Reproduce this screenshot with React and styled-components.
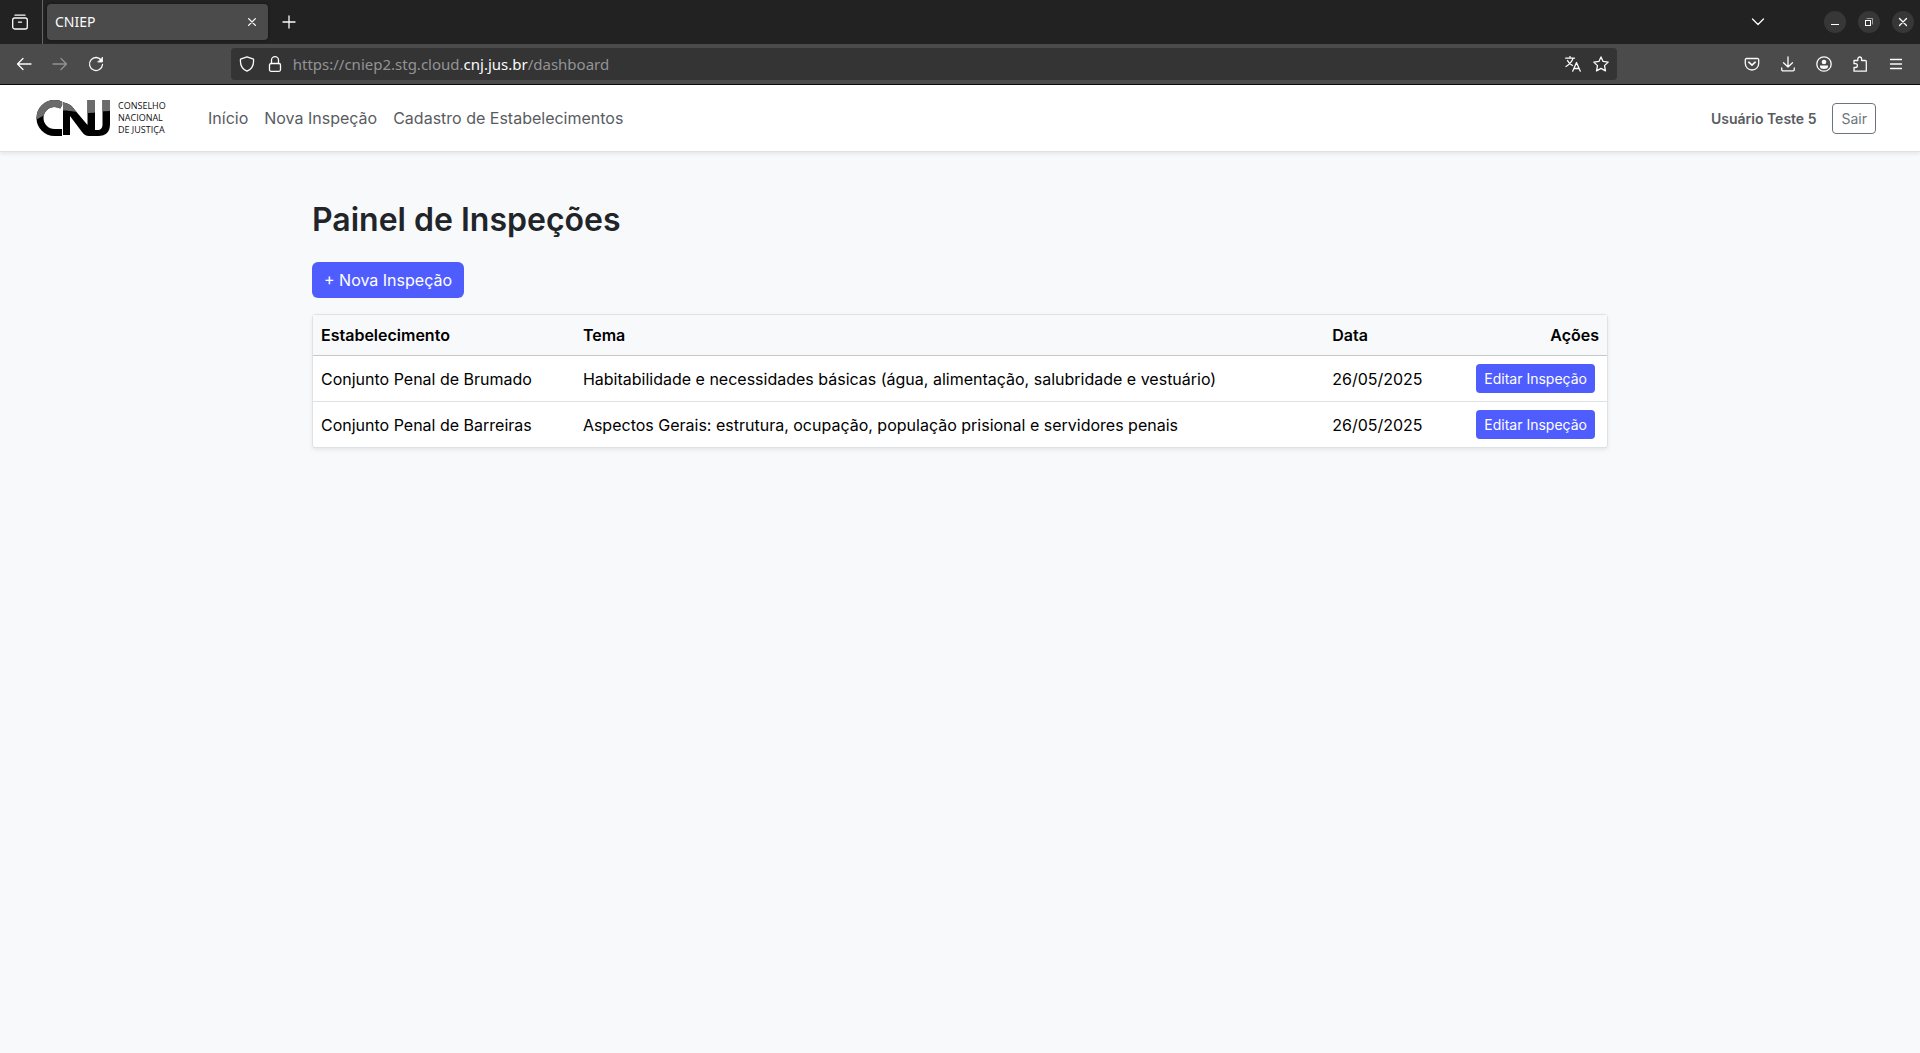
import React from 'react';
import styled, { createGlobalStyle } from 'styled-components';

const GlobalStyle = createGlobalStyle`
  *, *::before, *::after { box-sizing: border-box; }
  body {
    margin: 0;
    background: #f8f9fb;
    color: #212529;
    font: 400 16px/24px Inter, "Liberation Sans", sans-serif;
  }
  button { font-family: inherit; cursor: pointer; }
`;

/* ---------- Browser window ---------- */

const Chrome = styled.header`
  background: #222;
  color: #fbfbfe;
  font-family: "Noto Sans", "Open Sans", sans-serif;
  border-bottom: 1px solid #0c0c0d;
`;

const TabStrip = styled.div`
  display: flex;
  align-items: center;
  height: 44px;
  padding-right: 6px;
`;

const ChromeButton = styled.button`
  display: flex;
  align-items: center;
  justify-content: center;
  flex: none;
  width: ${(p) => p.$width || 36}px;
  height: 32px;
  padding: 0;
  border: 0;
  background: none;
  color: inherit;
  opacity: ${(p) => (p.disabled ? 0.4 : 1)};
`;

const Divider = styled.span`
  width: 1px;
  height: 44px;
  margin: 0 4px 0 2px;
  background: #666;
`;

const Tab = styled.div`
  display: flex;
  align-items: center;
  justify-content: space-between;
  width: 221px;
  height: 36px;
  padding: 0 4px 0 8px;
  border-radius: 4px;
  background: #4b4b4b;
  box-shadow: 0 0 3px rgba(0, 0, 0, 0.5);
  font-size: 14px;
  line-height: 20px;
`;

const WindowControls = styled.div`
  display: flex;
  gap: 12px;
  margin-left: 48px;
`;

const WindowButton = styled.button`
  display: flex;
  align-items: center;
  justify-content: center;
  width: 22px;
  height: 22px;
  padding: 0;
  border: 0;
  border-radius: 50%;
  background: #373737;
  color: #fff;
`;

const Toolbar = styled.div`
  display: flex;
  align-items: center;
  height: 40px;
  padding: 0 6px;
  background: #4b4b4b;
`;

const Spring = styled.span`
  flex: ${(p) => p.$grow || 1} 1 0;
`;

const AddressBar = styled.div`
  display: flex;
  align-items: center;
  flex: 154 1 0;
  min-width: 0;
  height: 32px;
  padding: 0 2px;
  border-radius: 4px;
  background: #343434;
`;

const Address = styled.div`
  flex: 1;
  min-width: 0;
  padding-left: 4px;
  overflow: hidden;
  white-space: nowrap;
  color: #939395;
  font-size: 15px;
  line-height: 20px;
  outline: none;
`;

const Domain = styled.span`
  color: #fbfbfe;
`;

const IconSvg = styled.svg`
  display: block;
  flex: none;
  fill: none;
  stroke: currentColor;
  stroke-width: ${(p) => p.$stroke || 1.3};
  stroke-linecap: round;
  stroke-linejoin: round;
`;

const Icon = ({ size = 16, stroke, children }) => (
  <IconSvg width={size} height={size} viewBox="0 0 16 16" $stroke={stroke} aria-hidden="true">
    {children}
  </IconSvg>
);

/* ---------- Site ---------- */

const Navbar = styled.nav`
  display: flex;
  align-items: center;
  min-height: 67px;
  padding: 8px 44px 8px 36px;
  background: #fff;
  border-bottom: 1px solid #dee2e6;
  box-shadow: 0 2px 4px rgba(0, 0, 0, 0.075);
`;

const Brand = styled.a`
  display: flex;
  align-items: center;
  gap: 8px;
  min-width: 140px;
  margin-right: 32px;
  color: #111;
  text-decoration: none;
`;

const BrandName = styled.span`
  font: 500 9px/12px "Open Sans", "Noto Sans", sans-serif;
  white-space: nowrap;
`;

const NavLinks = styled.div`
  display: flex;
  gap: 16px;
  flex: 1;
`;

const NavLink = styled.a`
  color: #595c5f;
  text-decoration: none;
`;

const UserName = styled.span`
  margin-right: 16px;
  color: #595c5f;
  font-size: 14px;
  font-weight: 600;
  line-height: 21px;
`;

const LogoutButton = styled.button`
  padding: 4px 8px;
  border: 1px solid #6c757d;
  border-radius: 4px;
  background: #fff;
  color: #6c757d;
  font-size: 14px;
  line-height: 21px;
`;

const Main = styled.main`
  max-width: 1320px;
  margin: 0 auto;
  padding: 48px 12px;
`;

const Title = styled.h1`
  margin: 0 0 22px;
  font-size: 32px;
  font-weight: 600;
  line-height: 40px;
`;

const PrimaryButton = styled.button`
  display: block;
  margin: ${(p) => (p.$small ? '0 4px 0 auto' : '0 0 16px')};
  padding: ${(p) => (p.$small ? '4px 8px' : '6px 12px')};
  border: 0;
  border-radius: ${(p) => (p.$small ? 4 : 6)}px;
  background: #4f5dff;
  color: #fff;
  font-size: ${(p) => (p.$small ? 14 : 16)}px;
  line-height: ${(p) => (p.$small ? 21 : 24)}px;
  white-space: nowrap;
`;

const TableCard = styled.div`
  border: 1px solid #dee2e6;
  border-bottom: 0;
  border-radius: 4px;
  background: #fff;
  box-shadow: 0 2px 4px rgba(0, 0, 0, 0.075);
`;

const Table = styled.table`
  width: 100%;
  border-collapse: separate;
  border-spacing: 0;
  color: #000;
`;

const HeadCell = styled.th`
  padding: 8px;
  border-bottom: 1px solid #c6c7c8;
  background: #f8f9fa;
  font-weight: 600;
  text-align: ${(p) => (p.$end ? 'right' : 'left')};
`;

const Cell = styled.td`
  padding: 8px;
  border-bottom: 1px solid #dee2e6;
  vertical-align: middle;
`;

const Logo = () => (
  <svg width="74" height="36" viewBox="0 0 74 36" aria-hidden="true">
    <defs>
      <clipPath id="mark-top">
        <path d="M0 0H74V11C66 11 60 13 52 13C40 13 32 9 22 11C12 13 6 16 0 20Z" />
      </clipPath>
      <g id="mark">
        <path
          d="M26 5.5C23.5 4 21 3.5 18.5 3.5A14.5 14.5 0 0 0 18.5 32.5H26"
          fill="none"
          strokeWidth="7"
        />
        <path d="M27 2.5C32 3 35 5 38 9L51.5 25V0H59V36H53C50 36 48 34.5 46 32L34 16V35H27Z" stroke="none" />
        <path d="M66.5 0H74V24C74 32 70 36 62 36H58V30H61C65 30 66.5 28 66.5 24Z" stroke="none" />
      </g>
    </defs>
    <use href="#mark" fill="#000" stroke="#000" />
    <use href="#mark" fill="#6b6b6b" stroke="#6b6b6b" clipPath="url(#mark-top)" />
    <path d="M26.5 1V36M59.5 12V30" stroke="#fff" strokeWidth="0.6" />
  </svg>
);

const inspections = [
  {
    place: 'Conjunto Penal de Brumado',
    theme: 'Habitabilidade e necessidades básicas (água, alimentação, salubridade e vestuário)',
    date: '26/05/2025',
  },
  {
    place: 'Conjunto Penal de Barreiras',
    theme: 'Aspectos Gerais: estrutura, ocupação, população prisional e servidores penais',
    date: '26/05/2025',
  },
];

const BrowserChrome = () => (
  <Chrome>
    <TabStrip>
      <ChromeButton $width={40} aria-label="Visualizar abas">
        <Icon>
          <rect x="0.7" y="4" width="14.6" height="11" rx="2" />
          <path d="M3 1.2H13M6.5 8.2H9.5" />
        </Icon>
      </ChromeButton>
      <Divider />
      <Tab>
        CNIEP
        <ChromeButton $width={24} aria-label="Fechar aba">
          <Icon size={12} stroke={1.8}>
            <path d="M3.5 3.5L12.5 12.5M12.5 3.5L3.5 12.5" />
          </Icon>
        </ChromeButton>
      </Tab>
      <ChromeButton $width={42} aria-label="Nova aba">
        <Icon>
          <path d="M8 2V14M2 8H14" />
        </Icon>
      </ChromeButton>
      <Spring />
      <ChromeButton aria-label="Listar abas">
        <Icon>
          <path d="M2.5 5L8 10.5L13.5 5" />
        </Icon>
      </ChromeButton>
      <WindowControls>
        <WindowButton aria-label="Minimizar">
          <Icon>
            <path d="M4 10.5H12" strokeLinecap="butt" strokeWidth="1" />
          </Icon>
        </WindowButton>
        <WindowButton aria-label="Restaurar">
          <Icon>
            <path d="M6 4.5H11.5V10" strokeWidth="1" opacity="0.5" />
            <rect x="4.5" y="6.5" width="5" height="5" strokeWidth="1" strokeLinejoin="miter" />
          </Icon>
        </WindowButton>
        <WindowButton aria-label="Fechar">
          <Icon>
            <path d="M4.5 4.5L11.5 11.5M11.5 4.5L4.5 11.5" />
          </Icon>
        </WindowButton>
      </WindowControls>
    </TabStrip>
    <Toolbar>
      <ChromeButton aria-label="Voltar">
        <Icon>
          <path d="M15 8H1.5M7 2.5L1.5 8L7 13.5" />
        </Icon>
      </ChromeButton>
      <ChromeButton aria-label="Avançar" disabled>
        <Icon>
          <path d="M1 8H14.5M9 2.5L14.5 8L9 13.5" />
        </Icon>
      </ChromeButton>
      <ChromeButton aria-label="Recarregar">
        <Icon>
          <path d="M13.5 4.5A6.5 6.5 0 1 0 14.5 8.5" />
          <path d="M14.5 1.5V6H10Z" fill="currentColor" strokeWidth="0.8" />
        </Icon>
      </ChromeButton>
      <Spring $grow={13} />
      <AddressBar>
        <ChromeButton $width={28} aria-label="Proteção">
          <Icon>
            <path d="M8 0.8L14.5 3.2C15 8.5 13 13 8 15.2C3 13 1 8.5 1.5 3.2Z" />
          </Icon>
        </ChromeButton>
        <ChromeButton $width={28} aria-label="Segurança do site">
          <Icon>
            <rect x="2.5" y="7.5" width="11" height="7.8" rx="1.5" />
            <path d="M4.5 7.5V4.2A3.5 3.5 0 0 1 11.5 4.2V7.5" />
          </Icon>
        </ChromeButton>
        <Address role="textbox" aria-label="Endereço" contentEditable suppressContentEditableWarning spellCheck={false}>
          https://cniep2.stg.cloud.<Domain>cnj.jus.br</Domain>/dashboard
        </Address>
        <ChromeButton $width={28} aria-label="Traduzir página">
          <Icon>
            <path d="M0.7 2.2H9.5M5 0.5V2.2M8 2.2C7 6 4.5 8.5 1 10.5M2.5 4.5C3.5 7 5.5 8.5 7.5 9.5" />
            <path d="M7.7 15.2L11.5 6.5L15.3 15.2M9 12.5H14" />
          </Icon>
        </ChromeButton>
        <ChromeButton $width={28} aria-label="Favoritar">
          <Icon>
            <path d="M8 0.9L10.1 5.4L15.2 6.1L11.5 9.6L12.5 14.9L8 12.4L3.5 14.9L4.5 9.6L0.8 6.1L5.9 5.4Z" />
          </Icon>
        </ChromeButton>
      </AddressBar>
      <Spring $grow={13} />
      <ChromeButton aria-label="Pocket">
        <Icon>
          <path d="M2.5 2.5H13.5A1.2 1.2 0 0 1 14.7 3.7V7.5A6.7 6.5 0 0 1 1.3 7.5V3.7A1.2 1.2 0 0 1 2.5 2.5Z" />
          <path d="M4.8 6.2L8 9.2L11.2 6.2" strokeWidth="1.6" />
        </Icon>
      </ChromeButton>
      <ChromeButton aria-label="Downloads">
        <Icon>
          <path d="M8 0.8V11M3.5 6.8L8 11L12.5 6.8M1.7 12V13.5A1.3 1.3 0 0 0 3 14.8H13A1.3 1.3 0 0 0 14.3 13.5V12" />
        </Icon>
      </ChromeButton>
      <ChromeButton aria-label="Conta">
        <Icon>
          <circle cx="8" cy="8" r="7.2" />
          <circle cx="8" cy="6" r="2.3" fill="currentColor" stroke="none" />
          <path d="M4 9.5H12V10.5A4 2.5 0 0 1 4 10.5Z" fill="currentColor" stroke="none" />
        </Icon>
      </ChromeButton>
      <ChromeButton aria-label="Extensões">
        <Icon>
          <path d="M2 7.5V4.5H5.8V3A1.9 2 0 0 1 9.6 3V4.5H13.3A1 1 0 0 1 14.3 5.5V15.2H2V11.5H3.5A1.9 1.9 0 0 0 3.5 7.7H2Z" />
        </Icon>
      </ChromeButton>
      <ChromeButton aria-label="Menu">
        <Icon>
          <path d="M2.5 3.5H13.5M2.5 8H13.5M2.5 12.5H13.5" />
        </Icon>
      </ChromeButton>
    </Toolbar>
  </Chrome>
);

export default function App() {
  return (
    <>
      <GlobalStyle />
      <BrowserChrome />
      <Navbar>
        <Brand href="#inicio" aria-label="Conselho Nacional de Justiça">
          <Logo />
          <BrandName>
            CONSELHO
            <br />
            NACIONAL
            <br />
            DE JUSTIÇA
          </BrandName>
        </Brand>
        <NavLinks>
          <NavLink href="#inicio">Início</NavLink>
          <NavLink href="#nova-inspecao">Nova Inspeção</NavLink>
          <NavLink href="#estabelecimentos">Cadastro de Estabelecimentos</NavLink>
        </NavLinks>
        <UserName>Usuário Teste 5</UserName>
        <LogoutButton type="button">Sair</LogoutButton>
      </Navbar>
      <Main>
        <Title>Painel de Inspeções</Title>
        <PrimaryButton type="button">+ Nova Inspeção</PrimaryButton>
        <TableCard>
          <Table>
            <thead>
              <tr>
                <HeadCell scope="col">Estabelecimento</HeadCell>
                <HeadCell scope="col">Tema</HeadCell>
                <HeadCell scope="col">Data</HeadCell>
                <HeadCell scope="col" $end>Ações</HeadCell>
              </tr>
            </thead>
            <tbody>
              {inspections.map((item) => (
                <tr key={item.place}>
                  <Cell>{item.place}</Cell>
                  <Cell>{item.theme}</Cell>
                  <Cell>{item.date}</Cell>
                  <Cell>
                    <PrimaryButton type="button" $small>Editar Inspeção</PrimaryButton>
                  </Cell>
                </tr>
              ))}
            </tbody>
          </Table>
        </TableCard>
      </Main>
    </>
  );
}
